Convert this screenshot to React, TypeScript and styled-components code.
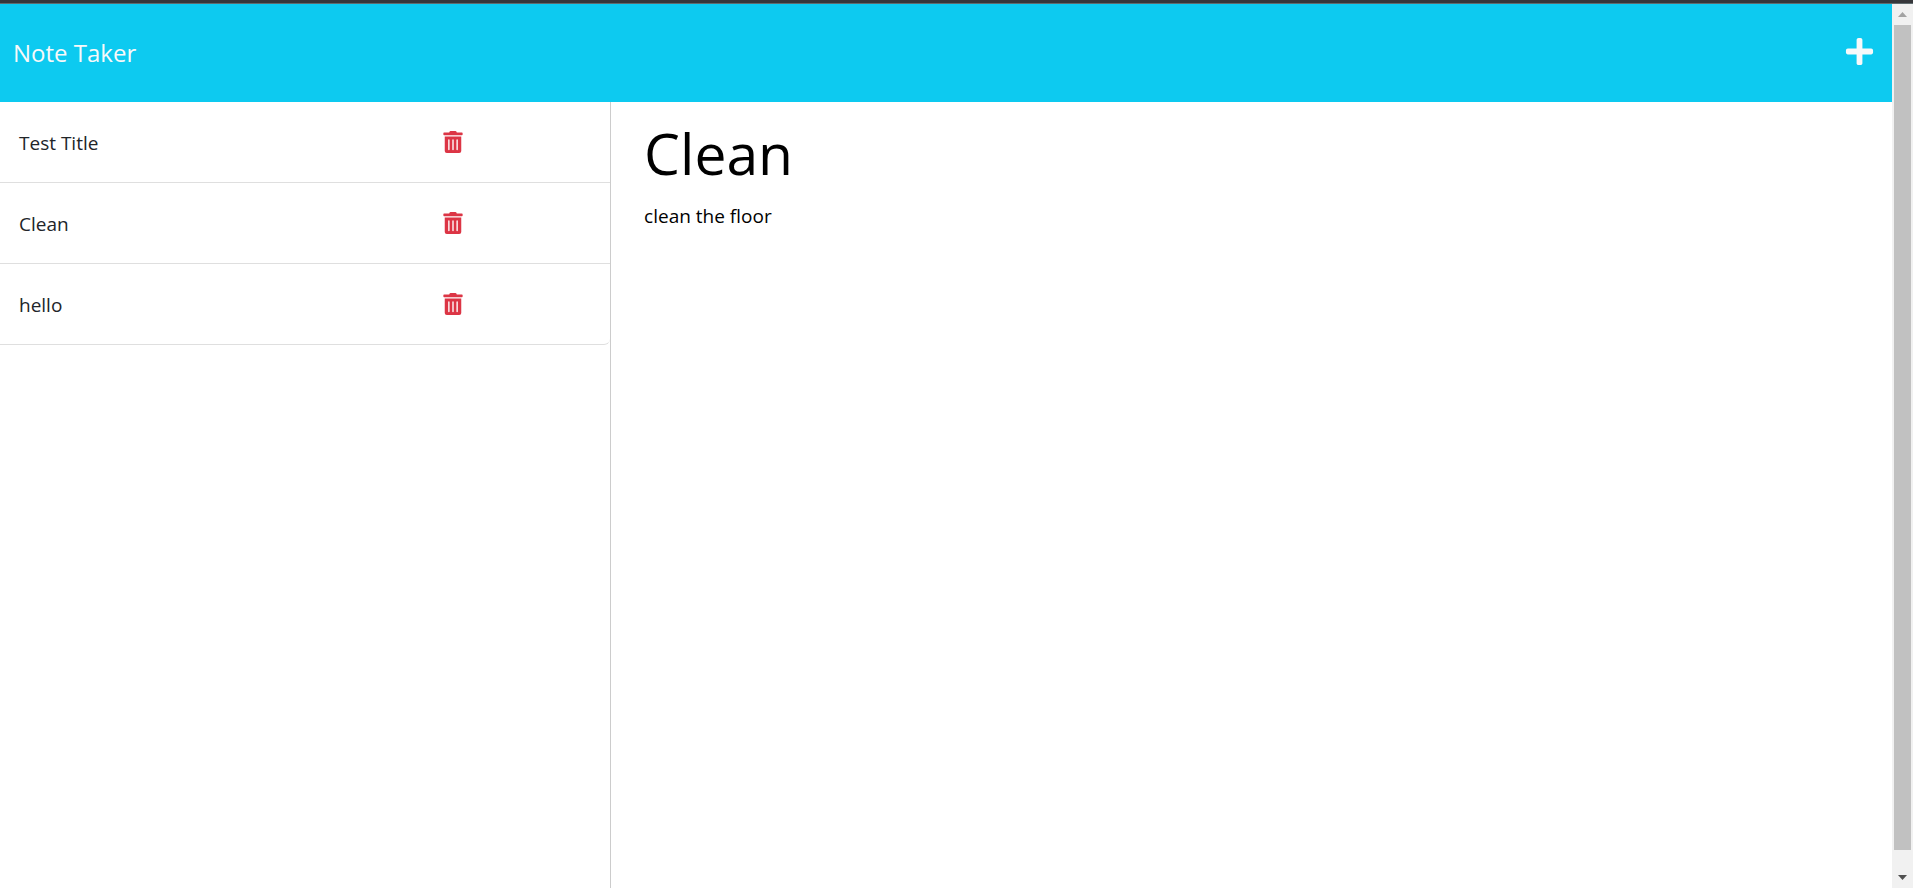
import React, { useState } from "react";
import styled, { createGlobalStyle } from "styled-components";
import { FaPlus, FaTrashAlt } from "react-icons/fa";

const GlobalStyle = createGlobalStyle`
  *, *::before, *::after { box-sizing: border-box; }
  body {
    margin: 0;
    background: #ffffff;
    color: #212529;
    font-family: "Segoe UI", "Open Sans", "Noto Sans", sans-serif;
    font-size: 19px;
    line-height: 30px;
  }
`;

const Frame = styled.div`
  display: flex;
  flex-direction: column;
  height: 100vh;
  overflow: hidden;
`;

const TopEdge = styled.div`
  flex: none;
  height: 4px;
  background: #36373b;
  border-bottom: 1px solid #5f6b6e;
`;

const Viewport = styled.div`
  flex: 1;
  min-height: 0;
  display: flex;
`;

const Page = styled.div`
  flex: 1;
  min-width: 0;
  display: flex;
  flex-direction: column;
`;

const Navbar = styled.header`
  display: flex;
  align-items: center;
  justify-content: space-between;
  padding: 30px 13px;
  background: #0dcaf0;
`;

const Brand = styled.a`
  color: #f8f9fa;
  font-size: 24px;
  line-height: 38px;
  text-decoration: none;
`;

const IconButton = styled.button<{ $color: string; $size: number }>`
  display: flex;
  padding: 0;
  border: 0;
  background: transparent;
  color: ${(p) => p.$color};
  font-size: ${(p) => p.$size}px;
  cursor: pointer;

  svg {
    display: block;
    width: auto;
    height: 1em;
  }
`;

const NavActions = styled.div`
  padding: 0 4px 4px;
`;

const Columns = styled.div`
  flex: 1;
  min-height: 0;
  display: flex;
`;

const Sidebar = styled.aside`
  flex: none;
  width: 32.3%;
  border-right: 1px solid #cccccc;
`;

const NoteList = styled.ul`
  margin: 0;
  padding: 0;
  list-style: none;
  border-bottom: 1px solid #dfdfdf;
  border-radius: 0 0 6px 0;
`;

const NoteItem = styled.li`
  display: grid;
  grid-template-columns: 74% 1fr;
  justify-items: start;
  padding: 25px 19px;

  & + & {
    border-top: 1px solid #dfdfdf;
  }
`;

const NoteLink = styled.a`
  padding-top: 2px;
  line-height: 28px;
  color: inherit;
  text-decoration: none;
`;

const DeleteSlot = styled.div`
  padding-top: 4px;
`;

const NoteView = styled.main`
  flex: 1;
  padding: 14px 33px;
  color: #000000;
`;

const NoteTitle = styled.h1`
  margin: 0 0 10px;
  font-size: 57px;
  font-weight: 400;
  line-height: 74px;
`;

const NoteText = styled.p`
  margin: 0;
  line-height: 32px;
`;

const ScrollTrack = styled.div`
  flex: none;
  width: 21px;
  display: flex;
  flex-direction: column;
  background: #f1f1f1;
`;

const ScrollArrow = styled.div<{ $color: string }>`
  flex: none;
  height: 21px;
  display: flex;
  align-items: center;
  justify-content: center;
  color: ${(p) => p.$color};
`;

const ScrollLane = styled.div`
  flex: 1;
  min-height: 0;
  padding: 0 2px;
`;

const ScrollThumb = styled.div`
  height: 98%;
  background: #c1c1c1;
`;

interface Note {
  id: number;
  title: string;
  text: string;
}

const initialNotes: Note[] = [
  { id: 1, title: "Test Title", text: "Test text" },
  { id: 2, title: "Clean", text: "clean the floor" },
  { id: 3, title: "hello", text: "hello" },
];

function Arrow({ points }: { points: string }) {
  return (
    <svg width="9" height="5" viewBox="0 0 9 5" aria-hidden="true">
      <polygon points={points} fill="currentColor" />
    </svg>
  );
}

export default function App() {
  const [notes, setNotes] = useState(initialNotes);
  const [activeId, setActiveId] = useState(2);
  const active = notes.find((n) => n.id === activeId);

  return (
    <Frame>
      <GlobalStyle />
      <TopEdge />
      <Viewport>
        <Page>
          <Navbar>
            <Brand href="#">Note Taker</Brand>
            <NavActions>
              <IconButton
                $color="#f8f9fa"
                $size={31}
                aria-label="New note"
                onClick={() => setActiveId(0)}
              >
                <FaPlus />
              </IconButton>
            </NavActions>
          </Navbar>
          <Columns>
            <Sidebar>
              <NoteList>
                {notes.map((note) => (
                  <NoteItem key={note.id}>
                    <NoteLink href="#" onClick={() => setActiveId(note.id)}>
                      {note.title}
                    </NoteLink>
                    <DeleteSlot>
                      <IconButton
                        $color="#dc3545"
                        $size={22}
                        aria-label={`Delete ${note.title}`}
                        onClick={() => setNotes(notes.filter((n) => n.id !== note.id))}
                      >
                        <FaTrashAlt />
                      </IconButton>
                    </DeleteSlot>
                  </NoteItem>
                ))}
              </NoteList>
            </Sidebar>
            <NoteView>
              {active && (
                <>
                  <NoteTitle>{active.title}</NoteTitle>
                  <NoteText>{active.text}</NoteText>
                </>
              )}
            </NoteView>
          </Columns>
        </Page>
        <ScrollTrack aria-hidden="true">
          <ScrollArrow $color="#a3a3a3">
            <Arrow points="0,5 4.5,0 9,5" />
          </ScrollArrow>
          <ScrollLane>
            <ScrollThumb />
          </ScrollLane>
          <ScrollArrow $color="#505050">
            <Arrow points="0,0 9,0 4.5,5" />
          </ScrollArrow>
        </ScrollTrack>
      </Viewport>
    </Frame>
  );
}
